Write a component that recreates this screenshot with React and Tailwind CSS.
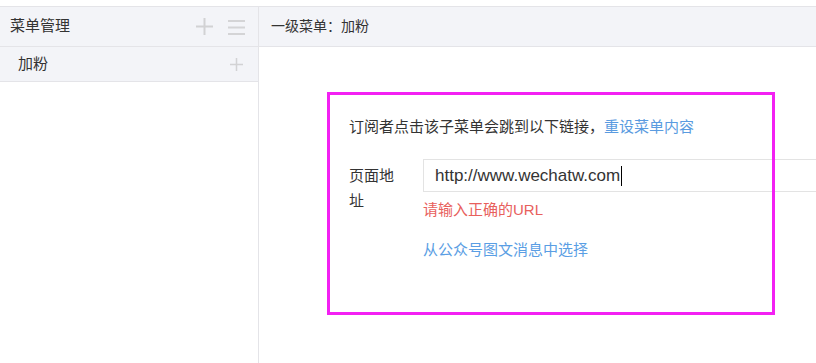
const font = {
  fontFamily: '"Liberation Sans", "Noto Sans CJK SC", sans-serif',
};

const PlusIcon = ({ size = 17, color = "#d2d2d4" }) => (
  <svg width={size} height={size} viewBox="0 0 17 17">
    <rect x="7.5" y="0" width="2" height="17" fill={color} />
    <rect x="0" y="7.5" width="17" height="2" fill={color} />
  </svg>
);

const MenuIcon = () => (
  <svg width="17" height="16" viewBox="0 0 17 16">
    <rect x="0" y="1" width="17" height="2" fill="#d4d4d6" />
    <rect x="0" y="7.5" width="17" height="2" fill="#d4d4d6" />
    <rect x="0" y="14" width="17" height="2" fill="#d4d4d6" />
  </svg>
);

const App = () => {
  return (
    <div
      className="relative w-[816px] h-[363px] overflow-hidden bg-white pt-[6px] text-[#333]"
      style={font}
    >
      <div className="flex h-full border-t border-[#e4e4e8]">
        {/* Left menu */}
        <aside className="w-[259px] shrink-0 border-r border-[#e4e4e8]">
          <div className="flex h-[40px] items-center justify-between border-b border-[#e4e4e8] bg-[#f3f4f8] pl-[10px] pr-[13px]">
            <span className="text-[15px]">菜单管理</span>
            <div className="flex items-center gap-[15px]">
              <PlusIcon />
              <MenuIcon />
            </div>
          </div>
          <div className="flex h-[35px] items-center justify-between border-b border-[#e4e4e8] bg-[#f3f4f8] pl-[18px] pr-[15px]">
            <span className="text-[15px]">加粉</span>
            <PlusIcon size={13} />
          </div>
        </aside>

        {/* Right detail */}
        <section className="flex-1">
          <div className="flex h-[40px] items-center border-b border-[#e4e4e8] bg-[#f3f4f8] pl-[12px]">
            <span className="text-[14px]">一级菜单：加粉</span>
          </div>
          <div className="pl-[90px] pt-[67px]">
            <p className="text-[15px] leading-[25px]">
              订阅者点击该子菜单会跳到以下链接，
              <a className="text-[#5a9be0]">重设菜单内容</a>
            </p>
            <div className="mt-[20px] flex">
              <label className="w-[50px] shrink-0 pt-[4px] text-[15px] leading-[25px]">
                页面地址
              </label>
              <div className="ml-[24px]">
                <div className="flex h-[33px] w-[430px] items-center border border-[#e3e3e3] pl-[11px] text-[17px]">
                  <span>http://www.wechatw.com</span>
                  <span className="ml-[1px] h-[20px] w-[1px] bg-black" />
                </div>
                <p className="mt-[5px] text-[15px] leading-[25px] text-[#e8605c]">
                  请输入正确的URL
                </p>
                <p className="mt-[15px] text-[15px] leading-[25px] text-[#5a9ee4]">
                  从公众号图文消息中选择
                </p>
              </div>
            </div>
          </div>
        </section>
      </div>

      {/* Highlight overlay */}
      <div className="pointer-events-none absolute left-[327px] top-[92px] h-[223px] w-[448px] border-[3px] border-[#f320f3]" />
    </div>
  );
};

export default App;
